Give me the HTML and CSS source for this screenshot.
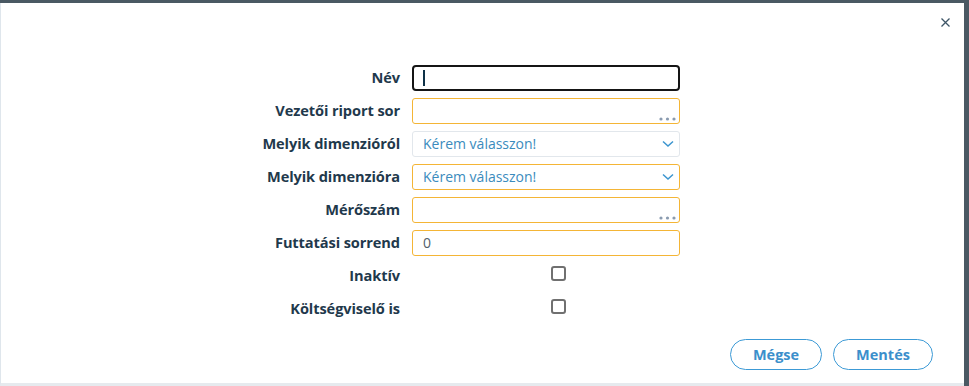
FILE: index.html
```html
<!DOCTYPE html>
<html lang="hu">
<head>
  <meta charset="UTF-8">
  <title>Szerkesztés</title>
  <link rel="stylesheet" href="styles.css">
</head>
<body>

<div class="modal">
  <div class="modal-head">
    <svg class="close" width="9" height="9" viewBox="0 0 9 9"><path d="M0.5 0.5 L8.5 8.5 M8.5 0.5 L0.5 8.5" stroke="#3d5566" stroke-width="1.3"/></svg>
  </div>

  <div class="form">
    <label class="lbl">Név</label>
    <div class="field"><input type="text" class="inp inp-focus" value=""><span class="caret"></span></div>

    <label class="lbl">Vezetői riport sor</label>
    <div class="field">
      <div class="inp inp-req">
        <svg class="dots" width="18" height="4" viewBox="0 0 18 4"><circle cx="2" cy="2" r="1.6" fill="#8a9bb0"/><circle cx="8.5" cy="2" r="1.6" fill="#8a9bb0"/><circle cx="15" cy="2" r="1.6" fill="#8a9bb0"/></svg>
      </div>
    </div>

    <label class="lbl">Melyik dimenzióról</label>
    <div class="field">
      <div class="inp inp-plain select">Kérem válasszon!
        <svg class="chev" width="12" height="8" viewBox="0 0 12 8"><path d="M1 1.5 L6 6 L11 1.5" fill="none" stroke="#3b95cf" stroke-width="1.5"/></svg>
      </div>
    </div>

    <label class="lbl">Melyik dimenzióra</label>
    <div class="field">
      <div class="inp inp-req select">Kérem válasszon!
        <svg class="chev" width="12" height="8" viewBox="0 0 12 8"><path d="M1 1.5 L6 6 L11 1.5" fill="none" stroke="#3b95cf" stroke-width="1.5"/></svg>
      </div>
    </div>

    <label class="lbl">Mérőszám</label>
    <div class="field">
      <div class="inp inp-req">
        <svg class="dots" width="18" height="4" viewBox="0 0 18 4"><circle cx="2" cy="2" r="1.6" fill="#8a9bb0"/><circle cx="8.5" cy="2" r="1.6" fill="#8a9bb0"/><circle cx="15" cy="2" r="1.6" fill="#8a9bb0"/></svg>
      </div>
    </div>

    <label class="lbl">Futtatási sorrend</label>
    <div class="field"><div class="inp inp-req num">0</div></div>

    <label class="lbl">Inaktív</label>
    <div class="field check"><span class="box"></span></div>

    <label class="lbl">Költségviselő is</label>
    <div class="field check"><span class="box"></span></div>
  </div>

  <div class="actions">
    <button class="btn btn-cancel">Mégse</button>
    <button class="btn btn-save">Mentés</button>
  </div>
</div>

</body>
</html>
```

FILE: styles.css
```css
body {
  margin: 0;
  background: #4a5963;
  font-family: 'Open Sans', 'Noto Sans', sans-serif;
  height: 386px;
  overflow: hidden;
}

.modal {
  margin-top: 3px;
  margin-right: 5px;
  height: 380px;
  background: #fff;
  border-left: 1px solid #dfe6ec;
  border-bottom: 3px solid #e6eaee;
  position: relative;
}

.modal-head {
  height: 62px;
  display: flex;
  justify-content: flex-end;
}

.close {
  margin-top: 15px;
  margin-right: 14px;
}

.form {
  display: grid;
  grid-template-columns: 399px 268px;
  grid-auto-rows: 26px;
  column-gap: 12px;
  row-gap: 7px;
}

.lbl {
  text-align: right;
  font-weight: 700;
  font-size: 14.6px;
  color: #1f394c;
  line-height: 25px;
  letter-spacing: -0.1px;
}

.field {
  position: relative;
}

.inp {
  box-sizing: border-box;
  width: 268px;
  height: 26px;
  border-radius: 3px;
  background: #fff;
  font-family: inherit;
  font-size: 14px;
  color: #3b8bbd;
  padding: 0 10px;
  line-height: 24px;
  position: relative;
}

.inp-focus {
  border: 2px solid #151515;
  outline: none;
  border-radius: 4px;
}

.caret {
  position: absolute;
  left: 11px;
  top: 5px;
  width: 2px;
  height: 16px;
  background: #0e3147;
}

.inp-req {
  border: 1px solid #f4b536;
}

.inp-plain {
  border: 1px solid #e2e7ec;
}

.num {
  color: #52606b;
}

.dots {
  position: absolute;
  right: 2px;
  bottom: 2px;
}

.chev {
  position: absolute;
  right: 5px;
  top: 8px;
}

.check {
  display: flex;
  justify-content: center;
  padding-left: 25px;
}

.box {
  display: block;
  width: 11px;
  height: 11px;
  border: 2px solid #707070;
  border-radius: 3px;
  margin-top: 3px;
}

.actions {
  display: flex;
  justify-content: flex-end;
  gap: 11px;
  padding-right: 31px;
  margin-top: 17px;
}

.btn {
  height: 31px;
  border: 1.5px solid #3c9ad6;
  background: #fff;
  color: #3c8fcb;
  font-family: inherit;
  font-weight: 700;
  font-size: 14.5px;
  border-radius: 16px;
  padding: 0;
}

.btn-cancel {
  width: 92px;
}

.btn-save {
  width: 100px;
}
```
